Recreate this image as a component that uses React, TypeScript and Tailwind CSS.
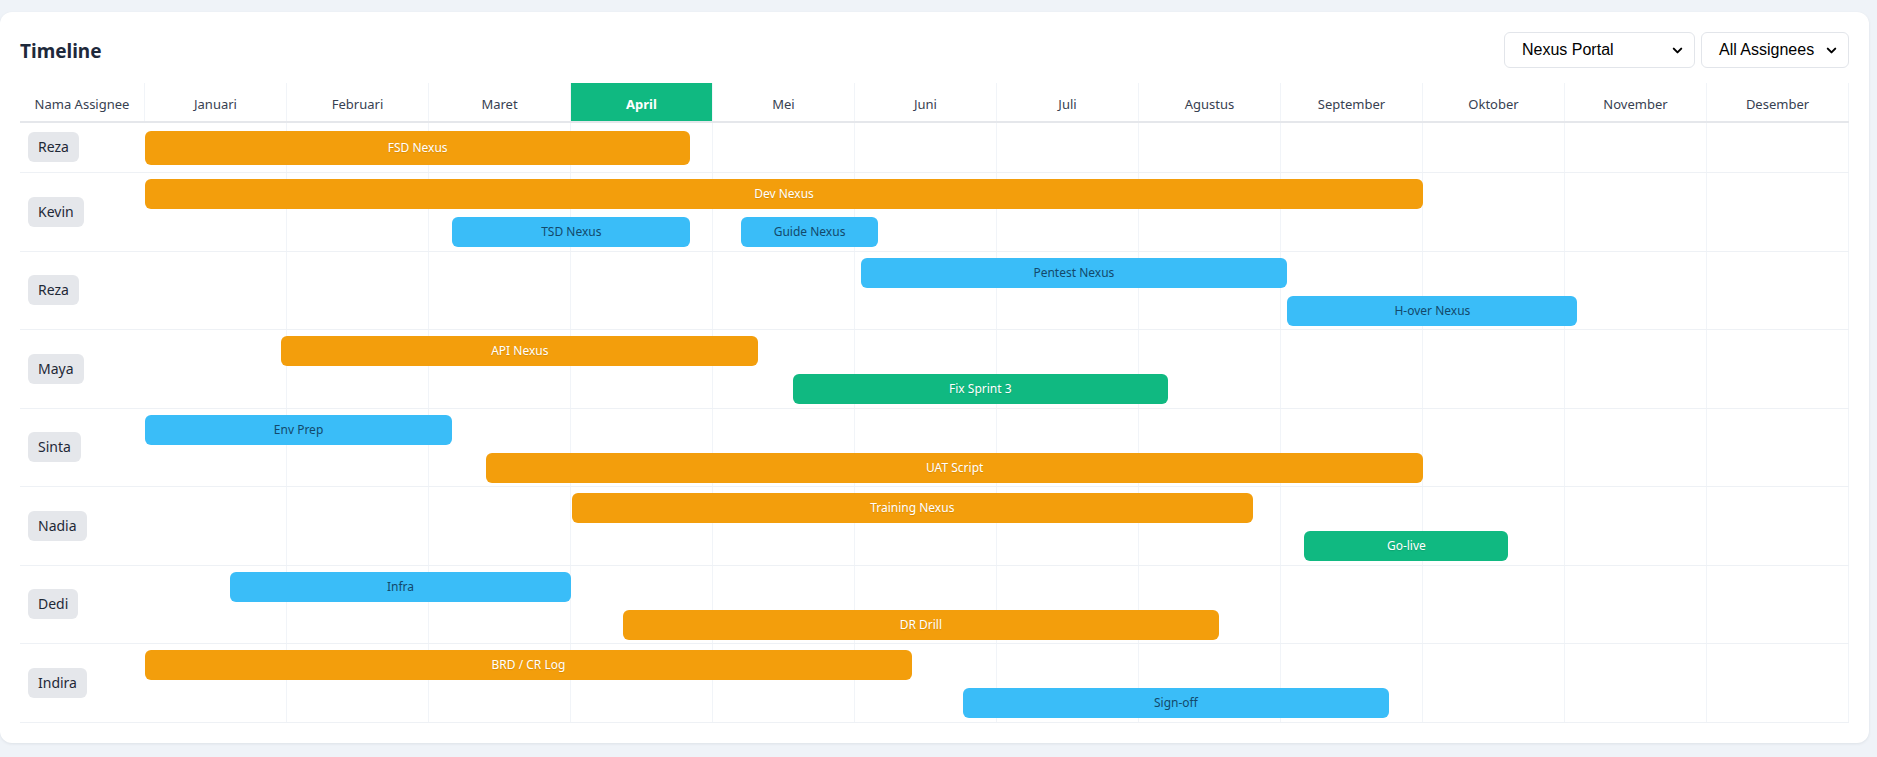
import { ChevronDown } from "lucide-react";

const MONTHS = [
  "Januari",
  "Februari",
  "Maret",
  "April",
  "Mei",
  "Juni",
  "Juli",
  "Agustus",
  "September",
  "Oktober",
  "November",
  "Desember",
];

// bulan yang sedang berjalan (0 = Januari)
const CURRENT_MONTH = 3;

type Tone = "orange" | "blue" | "green";

type Task = {
  label: string;
  start: number; // posisi dalam satuan bulan, 0..12
  end: number;
  tone: Tone;
  lane: 0 | 1;
};

type Row = { name: string; tasks: Task[] };

const ROWS: Row[] = [
  {
    name: "Reza",
    tasks: [{ label: "FSD Nexus", start: 0, end: 3.84, tone: "orange", lane: 0 }],
  },
  {
    name: "Kevin",
    tasks: [
      { label: "Dev Nexus", start: 0, end: 9.0, tone: "orange", lane: 0 },
      { label: "TSD Nexus", start: 2.165, end: 3.84, tone: "blue", lane: 1 },
      { label: "Guide Nexus", start: 4.2, end: 5.16, tone: "blue", lane: 1 },
    ],
  },
  {
    name: "Reza",
    tasks: [
      { label: "Pentest Nexus", start: 5.04, end: 8.043, tone: "blue", lane: 0 },
      { label: "H-over Nexus", start: 8.045, end: 10.088, tone: "blue", lane: 1 },
    ],
  },
  {
    name: "Maya",
    tasks: [
      { label: "API Nexus", start: 0.959, end: 4.32, tone: "orange", lane: 0 },
      { label: "Fix Sprint 3", start: 4.561, end: 7.204, tone: "green", lane: 1 },
    ],
  },
  {
    name: "Sinta",
    tasks: [
      { label: "Env Prep", start: 0, end: 2.163, tone: "blue", lane: 0 },
      { label: "UAT Script", start: 2.404, end: 9.0, tone: "orange", lane: 1 },
    ],
  },
  {
    name: "Nadia",
    tasks: [
      { label: "Training Nexus", start: 3.004, end: 7.803, tone: "orange", lane: 0 },
      { label: "Go-live", start: 8.165, end: 9.601, tone: "green", lane: 1 },
    ],
  },
  {
    name: "Dedi",
    tasks: [
      { label: "Infra", start: 0.599, end: 3.0, tone: "blue", lane: 0 },
      { label: "DR Drill", start: 3.365, end: 7.563, tone: "orange", lane: 1 },
    ],
  },
  {
    name: "Indira",
    tasks: [
      { label: "BRD / CR Log", start: 0, end: 5.401, tone: "orange", lane: 0 },
      { label: "Sign-off", start: 5.759, end: 8.761, tone: "blue", lane: 1 },
    ],
  },
];

const TONES: Record<Tone, string> = {
  orange: "bg-[#f39e0c] text-white [text-shadow:0_1px_1px_rgba(0,0,0,0.12)]",
  blue: "bg-[#3abdf8] text-[#13496b]",
  green: "bg-[#10b981] text-white [text-shadow:0_1px_1px_rgba(0,0,0,0.12)]",
};

function FilterSelect({ value, width }: { value: string; width: string }) {
  return (
    <div
      className={`flex h-9 items-center justify-between rounded-md border border-[#e2e5ea] bg-white pl-[17px] pr-[9px] font-['Liberation_Sans',Arial,sans-serif] text-base text-black ${width}`}
    >
      <span>{value}</span>
      <ChevronDown size={15} strokeWidth={3.2} className="text-black" />
    </div>
  );
}

function TimelineRow({ row }: { row: Row }) {
  const single = row.tasks.every((t) => t.lane === 0);

  return (
    <div
      className={`flex border-b border-[#eef1f5] ${single ? "h-[50.5px]" : "h-[78.5px]"}`}
    >
      <div className="flex w-[125px] shrink-0 items-center pl-2">
        <span className="flex h-[30px] items-center rounded-md bg-[#e5e7eb] px-2.5 text-sm text-[#1f2937]">
          {row.name}
        </span>
      </div>

      <div className="relative flex flex-1">
        {MONTHS.map((m) => (
          <div key={m} className="flex-1 border-r border-[#f1f4f8]" />
        ))}

        {row.tasks.map((t) => (
          <div
            key={t.label}
            className={`absolute flex items-center justify-center rounded-md text-xs ${TONES[t.tone]}`}
            style={{
              left: `${(t.start / 12) * 100}%`,
              width: `${((t.end - t.start) / 12) * 100}%`,
              top: single ? 8 : t.lane === 0 ? 6 : 44,
              height: single ? 34 : 30,
            }}
          >
            {t.label}
          </div>
        ))}
      </div>
    </div>
  );
}

export default function App() {
  return (
    <div className="min-h-screen bg-[#eff3f8] pt-3 pr-2 pb-[14px] font-['Noto_Sans',sans-serif]">
      <div className="rounded-xl bg-white px-5 pt-5 pb-[20px] shadow-[0_1px_3px_rgba(15,23,42,0.08)]">
        {/* header */}
        <div className="mb-[15px] flex h-9 items-center justify-between">
          <h2 className="translate-y-px text-[19px] font-bold text-[#1e293b]">Timeline</h2>
          <div className="flex items-center gap-1.5">
            <FilterSelect value="Nexus Portal" width="w-[191px]" />
            <FilterSelect value="All Assignees" width="w-[148px]" />
          </div>
        </div>

        {/* month header */}
        <div className="flex h-[39.5px] border-b-2 border-[#e5e7eb] text-[13px] text-[#374151]">
          <div className="flex w-[125px] shrink-0 items-center justify-center border-r border-[#f1f4f8] pt-[5px]">
            Nama Assignee
          </div>
          {MONTHS.map((m, i) => (
            <div
              key={m}
              className={`flex flex-1 items-center justify-center border-r border-[#f1f4f8] pt-[5px] ${
                i === CURRENT_MONTH ? "bg-[#10b981] font-bold text-white" : ""
              }`}
            >
              {m}
            </div>
          ))}
        </div>

        {ROWS.map((row, i) => (
          <TimelineRow key={i} row={row} />
        ))}
      </div>
    </div>
  );
}
